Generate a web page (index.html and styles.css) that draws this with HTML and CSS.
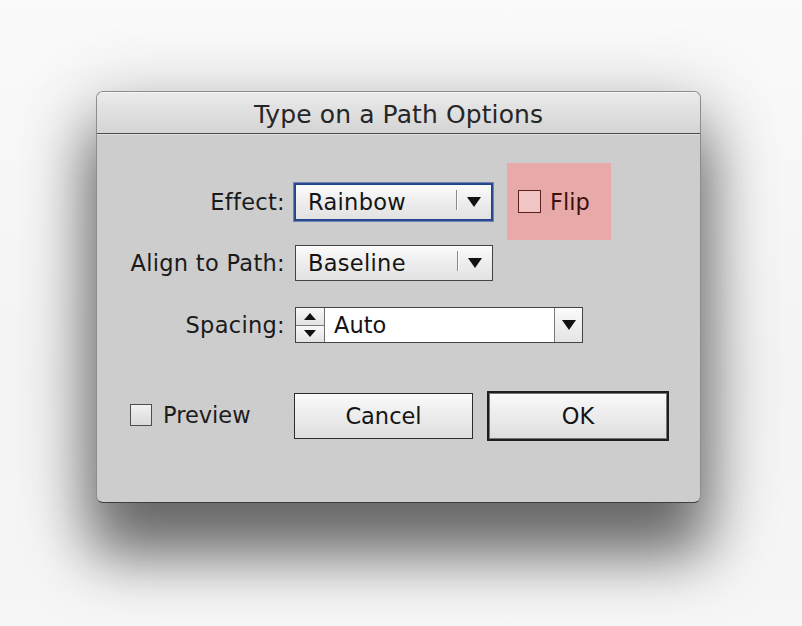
FILE: index.html
```html
<!DOCTYPE html>
<html>
<head>
<meta charset="utf-8">
<title>Type on a Path Options</title>
<link rel="stylesheet" href="styles.css">
</head>
<body>
<div class="stage">
  <div class="dialog">
    <div class="titlebar">Type on a Path Options</div>
    <div class="content">
      <div class="form">
        <div class="lbl">Effect:</div>
        <div class="ctrl-row">
          <div class="select focus">
            <span class="val">Rainbow</span>
            <span class="sep"></span>
            <span class="arrow-cell"><span class="tri-down"></span></span>
          </div>
          <div class="flip">
            <span class="check check-pink"></span>
            <span class="flip-text">Flip</span>
          </div>
        </div>

        <div class="lbl">Align to Path:</div>
        <div class="ctrl-row">
          <div class="select">
            <span class="val">Baseline</span>
            <span class="sep"></span>
            <span class="arrow-cell"><span class="tri-down"></span></span>
          </div>
        </div>

        <div class="lbl">Spacing:</div>
        <div class="ctrl-row">
          <div class="combo">
            <div class="stepper">
              <span class="step"><span class="tri-up small"></span></span>
              <span class="step"><span class="tri-down small"></span></span>
            </div>
            <div class="field">Auto</div>
            <div class="dd"><span class="tri-down"></span></div>
          </div>
        </div>
      </div>

      <div class="actions">
        <div class="preview">
          <span class="check"></span>
          <span>Preview</span>
        </div>
        <div class="buttons">
          <div class="btn">Cancel</div>
          <div class="btn btn-default">OK</div>
        </div>
      </div>
    </div>
  </div>
</div>
</body>
</html>
```

FILE: styles.css
```css
html, body {
  margin: 0;
  padding: 0;
}

body {
  font-family: "DejaVu Sans", "Noto Sans", sans-serif;
  color: #1c1c1c;
  background: #f6f6f6;
}

.stage {
  width: 802px;
  height: 626px;
  box-sizing: border-box;
  padding: 91px 0 0 96px;
  overflow: hidden;
  background: linear-gradient(#fafafa, #f3f3f3 60%, #f6f6f6);
}

.dialog {
  width: 605px;
  height: 412px;
  box-sizing: border-box;
  border: 1px solid #8c8c8c;
  border-bottom-color: #3e3e3e;
  border-radius: 7px;
  background: #cdcdcd;
  overflow: hidden;
  box-shadow:
    0 48px 60px 6px rgba(0, 0, 0, 0.52),
    0 10px 70px 10px rgba(0, 0, 0, 0.16);
}

.titlebar {
  height: 41px;
  border-bottom: 1px solid #4a4a4a;
  background: linear-gradient(#ebebeb, #d4d4d4);
  text-align: center;
  font-size: 25px;
  letter-spacing: 0.1px;
  line-height: 45px;
  color: #262626;
  box-shadow: inset 0 1px 0 #f6f6f6;
}

.content {
  padding-top: 28px;
  border-top: 1px solid #e2e2e2;
}

.form {
  display: grid;
  grid-template-columns: 188px auto;
  grid-template-rows: 77px 45px 80px;
  column-gap: 10px;
  align-items: center;
}

.lbl {
  font-size: 22.5px;
  text-align: right;
  color: #1a1a1a;
  letter-spacing: 0.3px;
}

.ctrl-row {
  display: flex;
  align-items: center;
}

.select {
  width: 198px;
  height: 36px;
  box-sizing: border-box;
  border: 1px solid #444;
  background: linear-gradient(#fbfbfb, #ececec 55%, #e2e2e2);
  display: flex;
  align-items: center;
  font-size: 22.5px;
  color: #141414;
}

.select.focus {
  width: 197px;
  border-color: #22428a;
  box-shadow: 0 0 0 1px #2b4c90, 0 0 0 2px rgba(70, 100, 165, 0.7);
}

.select .val {
  flex: 1;
  padding-left: 12px;
  letter-spacing: 0.3px;
}

.select .sep {
  width: 1px;
  align-self: stretch;
  margin: 5px 0 9px;
  background: #8a8a8a;
  box-shadow: 1px 0 0 #fafafa;
}

.arrow-cell {
  width: 34px;
  display: flex;
  justify-content: center;
  align-items: center;
}

.tri-down {
  width: 0;
  height: 0;
  border-left: 7px solid transparent;
  border-right: 7px solid transparent;
  border-top: 10px solid #111;
}

.tri-up {
  width: 0;
  height: 0;
  border-left: 7px solid transparent;
  border-right: 7px solid transparent;
  border-bottom: 10px solid #111;
}

.tri-down.small {
  border-left-width: 6px;
  border-right-width: 6px;
  border-top-width: 7px;
}

.tri-up.small {
  border-left-width: 6px;
  border-right-width: 6px;
  border-bottom-width: 7px;
}

.flip {
  margin-left: 15px;
  width: 104px;
  height: 77px;
  background: #e7aaa8;
  display: flex;
  align-items: center;
  padding-left: 11px;
  box-sizing: border-box;
  gap: 9px;
  font-size: 22.5px;
}

.flip-text {
  color: #3d1010;
}

.check {
  width: 22px;
  height: 22px;
  box-sizing: border-box;
  border: 1px solid #4e4e4e;
  background: linear-gradient(#f2f2f2, #d9d9d9);
  display: inline-block;
}

.check.check-pink {
  width: 23px;
  height: 23px;
  border-color: #5a2020;
  background: #f0c5c3;
}

.combo {
  width: 288px;
  height: 36px;
  box-sizing: border-box;
  border: 1px solid #444;
  display: flex;
  font-size: 22.5px;
  color: #141414;
}

.stepper {
  width: 28px;
  border-right: 1px solid #6e6e6e;
  display: flex;
  flex-direction: column;
}

.step {
  flex: 1;
  display: flex;
  justify-content: center;
  align-items: center;
  background: linear-gradient(#f8f8f8, #e3e3e3);
}

.step + .step {
  border-top: 1px solid #7a7a7a;
}

.field {
  flex: 1;
  background: #fff;
  padding-left: 9px;
  display: flex;
  align-items: center;
}

.dd {
  width: 27px;
  border-left: 1px solid #7a7a7a;
  background: linear-gradient(#fbfbfb, #e4e4e4);
  display: flex;
  justify-content: center;
  align-items: center;
}

.actions {
  margin-top: 26px;
  display: grid;
  grid-template-columns: 187px auto;
  column-gap: 10px;
  align-items: center;
  height: 50px;
}

.preview {
  padding-left: 33px;
  display: flex;
  align-items: center;
  gap: 11px;
  font-size: 22.5px;
  margin-top: -2px;
}

.buttons {
  display: flex;
  align-items: center;
  gap: 14px;
}

.btn {
  width: 179px;
  height: 46px;
  box-sizing: border-box;
  border: 1px solid #2c2c2c;
  background: linear-gradient(#fafafa, #ececec 50%, #dedede);
  display: flex;
  justify-content: center;
  align-items: center;
  font-size: 22.5px;
  color: #141414;
}

.btn-default {
  width: 182px;
  height: 50px;
  border: 2px solid #1e1e1e;
  box-shadow: inset 0 0 0 1px #777;
}
```
